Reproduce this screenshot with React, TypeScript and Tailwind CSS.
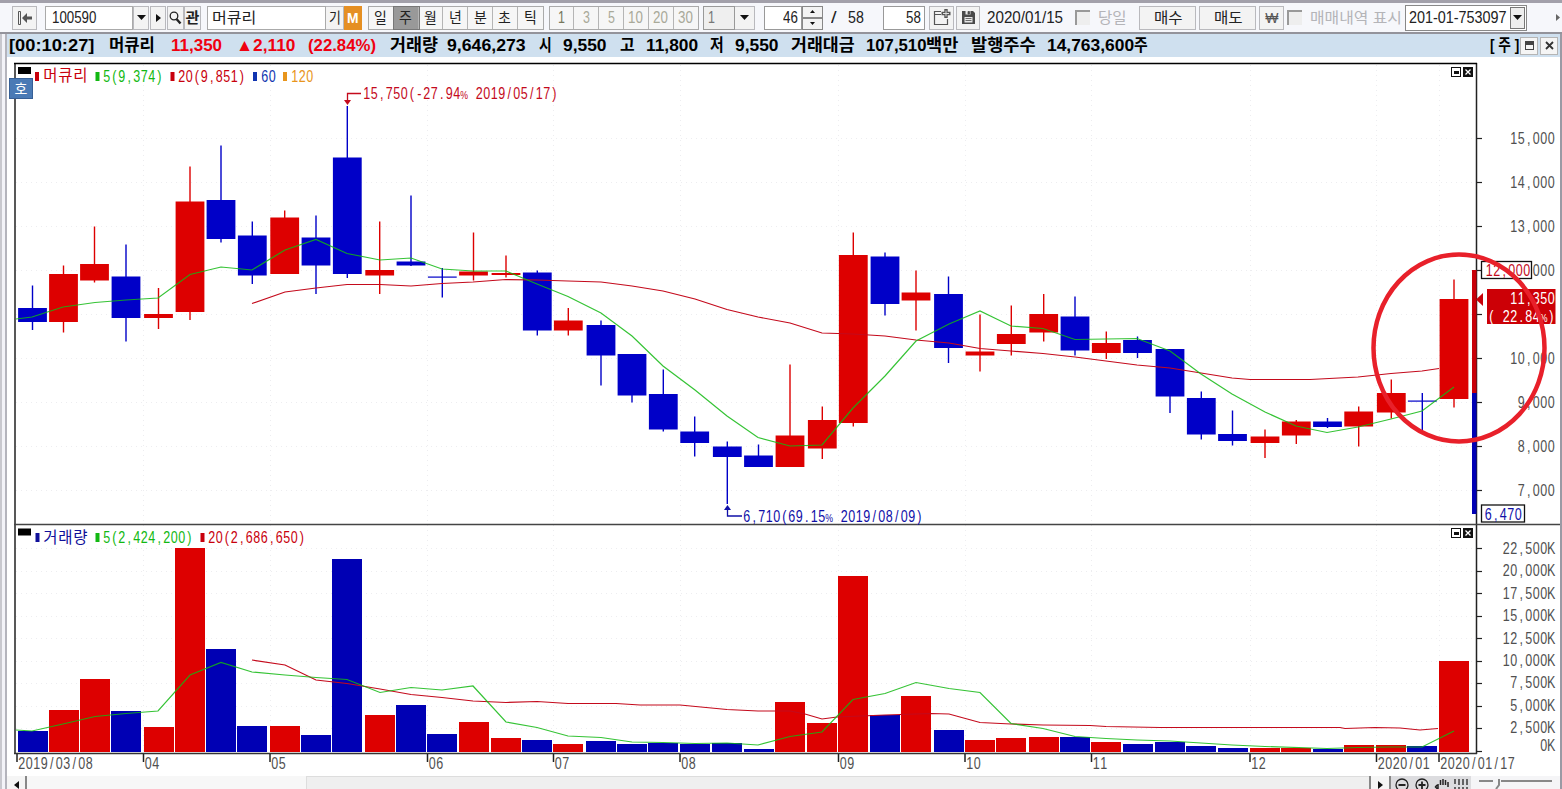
import { useLayoutEffect, useRef, useState } from "react";
import type { ReactNode } from "react";
import clsx from "clsx";

const RED = "#dd0000";
const BLUE = "#0000c8";
const VOLUME_BLUE = "#0000b4";
const GREEN = "#12b812";
const LINE_RED = "#c40a1c";

// x center, body top, body bottom, high, low, color, volume bar top
type Candle = [number, number, number, number, number, string, number];

const candles: Candle[] = [
  [32.5, 308, 322, 285.5, 330, "b", 731],
  [63.5, 274, 322, 265.5, 332.5, "r", 709.5],
  [94.5, 264, 280.5, 226.5, 282.5, "r", 678.5],
  [126, 276.5, 318, 244.5, 341.5, "b", 711],
  [158.5, 314, 318, 288, 329, "r", 727],
  [190, 201.5, 312, 166.5, 320, "r", 548],
  [221, 200, 239, 145.5, 242.5, "b", 648.5],
  [252.3, 235.5, 275.5, 221.5, 284, "b", 726],
  [284.7, 217.5, 274, 210.5, 274, "r", 726],
  [316, 237.5, 265.5, 215.5, 294, "b", 734.5],
  [347.3, 157.5, 274, 106, 278, "b", 558.5],
  [379.7, 270, 275.5, 221.5, 294, "r", 714.5],
  [411, 261.5, 265.5, 195.5, 266, "b", 704.5],
  [442.3, 276.5, 277.7, 268, 297.5, "b", 733.5],
  [473.5, 271.5, 275.5, 232.5, 280.5, "r", 722],
  [506, 273, 275, 255.5, 277.5, "r", 738],
  [537.3, 272.5, 330.5, 270.5, 335.5, "b", 739.5],
  [568.3, 320.5, 330.5, 308, 335.5, "r", 744],
  [601, 325, 355.5, 320.5, 385.5, "b", 741],
  [632, 354, 395.5, 354, 402.5, "b", 744],
  [663.3, 394, 429.5, 369.5, 431.5, "b", 743],
  [694.7, 431.5, 443, 416.5, 456.5, "b", 743.5],
  [727.3, 446.5, 457, 441.5, 504, "b", 743],
  [758.5, 455.5, 467, 444.5, 467, "b", 748.5],
  [790, 435.5, 467, 364.5, 467, "r", 702],
  [822.3, 420, 448.5, 406.5, 459, "r", 723],
  [853.3, 255, 423, 232.5, 426.5, "r", 575.5],
  [885, 256.5, 304, 252.5, 315.5, "b", 715],
  [916, 292.5, 300.5, 270.5, 330.5, "r", 695.5],
  [948.5, 294, 348, 276.5, 363, "b", 729.5],
  [980, 351.5, 355.5, 314.5, 371.5, "r", 739.5],
  [1011.3, 334, 344, 305.5, 355.5, "r", 738],
  [1043.7, 314, 332.5, 294, 341.5, "r", 737],
  [1075, 316.5, 350.5, 296.5, 355.5, "b", 737],
  [1106.3, 343, 353, 331.5, 359, "r", 742],
  [1137.5, 340, 353, 336.5, 358, "b", 744],
  [1170, 349, 396.5, 349, 413, "b", 741.5],
  [1201.3, 398, 434.5, 391.5, 439.5, "b", 745.5],
  [1232.5, 434, 441, 410.5, 445.5, "b", 748],
  [1265, 436.5, 443, 429.5, 458, "r", 748],
  [1296.3, 421.5, 435.5, 420, 444, "r", 747.5],
  [1327.5, 421.5, 427, 418, 428, "b", 748.5],
  [1358.7, 411.5, 426.5, 406.5, 446.5, "r", 744.5],
  [1391.3, 393, 412.5, 379.5, 418.5, "r", 744.5],
  [1422.3, 400.5, 401.7, 393, 430, "b", 745.5],
  [1454, 299, 399, 279.5, 407.5, "r", 660.5],
];

const priceMa5 =
  "16,319 32,317 63,307 95,302.5 126,300 158,298 190,274.5 221,267 252,270 285,250 316,239.5 347,253.5 380,260 411,258 442,269 473,271 506,271 537,284 568,296.5 601,313 632,336 663,366 695,390 727,416 758,437.5 790,446 822,445 853,408 885,376 916,341 949,324 980,311 1011,326 1043,328.5 1075,339.5 1106,339 1137,338.5 1170,351 1201,374 1232,394 1265,412 1296,426 1327,432.5 1358,427 1391,419 1422,411 1454,387";
const priceMa20 =
  "252,303.5 285,292 316,288 347,284.5 380,284.5 411,286 442,283.5 473,282 506,279.5 537,280 568,281 601,282 632,286 663,291 695,299 727,309.5 758,317 790,323 822,333 853,334 885,336 916,340 949,343 980,348.5 1011,351 1043,353.5 1075,357 1106,361 1137,365 1170,368 1201,373 1232,378 1250,379.5 1310,379.5 1358,377 1391,373.5 1422,371 1439,368.5";
const volumeMa5 =
  "16,730 32,731 63,724 95,716.5 126,713.5 158,711 190,675 221,662.5 252,672 285,675 316,677.5 347,679.5 380,692.5 411,687.5 442,690 473,686 506,722 537,727.5 568,736 601,737.5 632,742 663,742.5 695,743.5 727,743 758,745 790,736.5 822,732 853,699.5 885,693.5 916,682.5 949,688.5 980,692.5 1011,723.5 1043,728.5 1075,736.5 1106,738.5 1137,740 1170,741 1201,743 1232,745 1265,746.5 1327,748.5 1358,747.5 1391,747 1422,747 1454,731";
const volumeMa20 =
  "252,660 285,665 316,680 347,683.5 380,689 411,694.5 442,697.5 473,701 506,702.5 537,701.5 568,703.5 616,703.5 640,705 680,705 727,709.5 758,711 790,711 805,714 822,719 837,717 885,715 931,713.5 949,714 980,722.5 1011,724 1043,725 1090,725.5 1106,726.5 1160,727.5 1340,727.5 1345,728.5 1375,727.5 1400,728 1420,730 1438,728.5";

// the 12,000 label is half covered by the upper limit tag
const priceTicks: [number, string][] = [
  [138.5, "15,000"],
  [182.5, "14,000"],
  [226.5, "13,000"],
  [270.5, "000"],
  [314.5, ""],
  [358.5, "10,000"],
  [402.5, "9,000"],
  [446.5, "8,000"],
  [490.5, "7,000"],
];

const volumeTicks: [number, number, string][] = [
  [548.5, 548, "22,500K"],
  [571.5, 570, "20,000K"],
  [593.5, 593, "17,500K"],
  [616.5, 615, "15,000K"],
  [638.5, 638, "12,500K"],
  [661.5, 660, "10,000K"],
  [683.5, 682, "7,500K"],
  [706.5, 705, "5,000K"],
  [728.5, 727, "2,500K"],
  [751.5, 745, "0K"],
];

const dateTicks: [number, string][] = [
  [17, "2019/03/08"],
  [143.5, "04"],
  [270, "05"],
  [427.5, "06"],
  [553.5, "07"],
  [680, "08"],
  [838.5, "09"],
  [965, "10"],
  [1091.5, "11"],
  [1250, "12"],
  [1376.5, "2020/01"],
  [1439, "2020/01/17"],
];

const periods = ["일", "주", "월", "년", "분", "초", "틱"];
const minutes = ["1", "3", "5", "10", "20", "30"];

// Squeezes its text horizontally so that it fills the width of the box
function Fit({ className, children }: { className: string; children: ReactNode }) {
  const box = useRef<HTMLSpanElement>(null);
  const text = useRef<HTMLSpanElement>(null);
  const [scale, setScale] = useState(1);

  useLayoutEffect(() => {
    if (box.current && text.current) {
      setScale(box.current.clientWidth / text.current.offsetWidth);
    }
  }, []);

  return (
    <span ref={box} className={clsx("block shrink-0 whitespace-pre", className)}>
      <span ref={text} className="inline-block origin-left" style={{ transform: `scaleX(${scale})` }}>
        {children}
      </span>
    </span>
  );
}

type ChartTextProps = {
  x: number;
  y: number;
  fill?: string;
  anchor?: "start" | "end";
  pitch?: number;
  squeeze?: number;
  size?: number;
  children: string;
};

// Fixed pitch text, one cell for each character
function ChartText({ x, y, fill = "#505050", anchor = "start", pitch = 7.5, squeeze = 0.76, size = 16.5, children }: ChartTextProps) {
  const left = anchor === "end" ? x - children.length * pitch : x;
  const xs = children.split("").map((_, i) => ((i + 0.5) * pitch) / squeeze);
  return (
    <text
      transform={`translate(${left} ${y}) scale(${squeeze} 1)`}
      x={xs.join(" ")}
      y={0}
      fill={fill}
      fontSize={size}
      textAnchor="middle"
      xmlSpace="preserve"
    >
      {children.split(/(%)/).map((part, i) =>
        part === "%" ? <tspan key={i} fontSize={11.5}>%</tspan> : part
      )}
    </text>
  );
}

function Down() {
  return (
    <svg width="9" height="5" viewBox="0 0 9 5">
      <path d="M0 0h9L4.5 5z" fill="#111" />
    </svg>
  );
}

function Right() {
  return (
    <svg width="5" height="8" viewBox="0 0 5 8">
      <path d="M0 0v8l5-4z" fill="#111" />
    </svg>
  );
}

function Btn({ className, children }: { className?: string; children: ReactNode }) {
  return (
    <button
      className={clsx(
        "flex h-6 shrink-0 items-center justify-center border border-[#b9b9bd] bg-[#f3f3f3]",
        className
      )}
    >
      {children}
    </button>
  );
}

function Toolbar() {
  return (
    <div className="flex h-[34px] shrink-0 items-center border-t-[3px] border-b-2 border-t-[#a2a0aa] border-b-[#93939b] bg-[#f6f7fb] pl-3 text-[15px] text-[#222]">
      <Btn className="mr-2 w-[25px]">
        <svg width="16" height="14" viewBox="0 0 16 14" fill="#555">
          <path d="M1.5.5h2v13h-2z" fill="none" stroke="#555" />
          <path d="M5 7l5-5v3.500h5v3h-5V12z" />
        </svg>
      </Btn>

      <div className="flex h-6 w-[88px] shrink-0 items-center border border-[#aaa] bg-white pl-[6px]">
        <Fit className="w-[44px] text-base">100590</Fit>
      </div>
      <Btn className="mr-px w-4 border-[#777]"><Down /></Btn>
      <Btn className="mr-px w-4 border-[#777]"><Right /></Btn>
      <Btn className="w-[17px] border-[#777]">
        <svg width="13" height="14" viewBox="0 0 13 14" fill="none" stroke="#222">
          <circle cx="5" cy="5" r="3.800" strokeWidth="1.300" />
          <path d="M7.500 8l4 4.500" strokeWidth="2.400" />
        </svg>
      </Btn>
      <Btn className="mr-[6px] w-[17px] border-[#777]"><Fit className="w-[14px] font-bold">관</Fit></Btn>

      <div className="flex h-6 w-[119px] shrink-0 items-center border border-[#aaa] bg-white pl-1">
        <Fit className="w-[44px]">머큐리</Fit>
      </div>
      <Btn className="w-[18px] border-l-0"><Fit className="w-3">기</Fit></Btn>
      <button className="mr-[6px] flex h-6 w-[18px] shrink-0 items-center justify-center bg-[#e58f23]">
        <Fit className="w-[12px] font-bold text-white">M</Fit>
      </button>

      <div className="mr-[5px] flex h-6 shrink-0 border border-[#aaa] bg-[#f6f6f6]">
        {periods.map((p) => (
          <button
            key={p}
            className={clsx(
              "flex w-[24.800px] items-center justify-center border-r border-[#b5b5b5] last:border-r-0",
              p === "주" && "bg-[#999] outline outline-[#777]"
            )}
          >
            <Fit className="w-[13px]">{p}</Fit>
          </button>
        ))}
      </div>

      <div className="mr-1 flex h-6 shrink-0 border border-[#aaa] bg-[#f6f6f6] text-base text-[#a9a999]">
        {minutes.map((m) => (
          <button
            key={m}
            className={clsx(
              "flex w-[24.800px] items-center justify-center border-r border-[#b5b5b5] last:border-r-0",
              m === "1" && "text-[#77775c]"
            )}
          >
            <Fit className={m.length === 2 ? "w-[15px]" : "w-[7px]"}>{m}</Fit>
          </button>
        ))}
      </div>

      <div className="flex h-6 w-8 shrink-0 items-center border border-[#999] bg-[#efefef] pl-1 text-[#777]">
        <Fit className="w-[7px] text-base">1</Fit>
      </div>
      <Btn className="mr-[9px] w-5 border-l-0"><Down /></Btn>

      <div className="flex h-6 w-[38px] shrink-0 items-center justify-end border border-[#999] bg-white pr-[3px]">
        <Fit className="w-[15px] text-base">46</Fit>
      </div>
      <div className="mr-[8px] flex h-6 w-[21px] shrink-0 flex-col">
        <button className="flex flex-1 items-center justify-center border border-[#888] bg-[#f3f3f3]">
          <svg width="5" height="3" viewBox="0 0 5 3"><path d="M0 3h5L2.500 0z" fill="#111" /></svg>
        </button>
        <button className="flex flex-1 items-center justify-center border border-[#888] bg-[#f3f3f3]">
          <svg width="5" height="3" viewBox="0 0 5 3"><path d="M0 0h5L2.500 3z" fill="#111" /></svg>
        </button>
      </div>
      <Fit className="mr-[12px] w-[5px] text-base">/</Fit>
      <Fit className="mr-[19px] w-[16px] text-base">58</Fit>
      <div className="mr-1 flex h-6 w-[42px] shrink-0 items-center justify-end border border-[#999] bg-white pr-[3px]">
        <Fit className="w-[15px] text-base">58</Fit>
      </div>

      <Btn className="mr-[2px] w-[25px]">
        <svg width="18" height="17" viewBox="0 0 18 17" fill="none" stroke="#555">
          <path d="M8 2.500H1.500v13h13V10M1.500 5.500H8" strokeWidth="1.200" />
          <path d="M13 0v9M8.500 4.500h9" strokeWidth="3.400" />
          <path d="M13 1.500v6M10 4.500h6" stroke="#ddd" />
        </svg>
      </Btn>
      <Btn className="mr-[7px] w-6">
        <svg width="13" height="13" viewBox="0 0 13 13">
          <path d="M0 0h11l2 2v11H0z" fill="#4a4a4a" />
          <path d="M3.500 0h5v3.500h-5zM2.500 6h8v5.500h-8z" fill="#e8e8e8" />
          <path d="M6 .5h1.500v2.500H6zM3.500 7.500h6M3.500 9.500h6" fill="#4a4a4a" stroke="#4a4a4a" strokeWidth=".8" />
        </svg>
      </Btn>

      <Fit className="mr-[12px] w-[76px] text-base">2020/01/15</Fit>
      <span className="mr-2 block size-[15px] shrink-0 border-t-2 border-l-2 border-t-[#999] border-l-[#999] bg-[#eee]" />
      <Fit className="mr-3 w-[29px] text-[#b4b4b8]">당일</Fit>
      <Btn className="mr-[3px] w-[57px]"><Fit className="w-[29px]">매수</Fit></Btn>
      <Btn className="mr-[3px] w-[57px]"><Fit className="w-[29px]">매도</Fit></Btn>
      <Btn className="mr-[3px] w-[25px]"><Fit className="w-[13px] text-sm text-[#555]">₩</Fit></Btn>
      <span className="mr-[8px] block size-[15px] shrink-0 border-t-2 border-l-2 border-t-[#999] border-l-[#999] bg-[#eee]" />
      <Fit className="mr-[3px] w-[92px] text-[#b4b4b8]">매매내역 표시</Fit>
      <div className="flex h-[26px] w-[122px] shrink-0 items-center border border-[#888] bg-white pl-[3px]">
        <Fit className="mr-[3px] w-[98px] text-base">201-01-753097</Fit>
        <button className="flex h-[22px] w-[15px] items-center justify-center border border-[#777] bg-[#eee]"><Down /></button>
      </div>
      <span className="ml-[29px]">
        <svg width="4" height="7" viewBox="0 0 4 7"><path d="M0 0v7l4-3.500z" fill="#666" /></svg>
      </span>
    </div>
  );
}

function QuoteBar() {
  return (
    <div className="flex h-[23px] shrink-0 items-center bg-[#cfe0ef] pl-[2px] text-[17px] font-bold text-black">
      <Fit className="mr-[15px] w-[85px]">[00:10:27]</Fit>
      <Fit className="mr-[16px] w-[46px]">머큐리</Fit>
      <Fit className="mr-[14px] w-[51px] text-[#f00010]">11,350</Fit>
      <Fit className="mr-[13px] w-[59px] text-[#f00010]">▲2,110</Fit>
      <Fit className="mr-[14px] w-[68px] text-[#f00010]">(22.84%)</Fit>
      <Fit className="mr-[9px] w-[48px]">거래량</Fit>
      <Fit className="mr-[13px] w-[79px]">9,646,273</Fit>
      <Fit className="mr-[11px] w-[13px]">시</Fit>
      <Fit className="mr-[13px] w-[44px]">9,550</Fit>
      <Fit className="mr-[11px] w-[15px]">고</Fit>
      <Fit className="mr-[12px] w-[52px]">11,800</Fit>
      <Fit className="mr-[11px] w-[14px]">저</Fit>
      <Fit className="mr-[12px] w-[44px]">9,550</Fit>
      <Fit className="mr-[11px] w-[64px]">거래대금</Fit>
      <Fit className="w-[60px]">107,510</Fit>
      <Fit className="mr-[13px] w-[32px]">백만</Fit>
      <Fit className="mr-[11px] w-[65px]">발행주수</Fit>
      <Fit className="w-[87px]">14,763,600</Fit>
      <Fit className="w-[14px]">주</Fit>
      <Fit className="ml-auto w-[29px]">[ 주 ]</Fit>
      <button className="ml-px flex size-[18px] shrink-0 items-center justify-center border border-[#b5b5b5] bg-[#f5f5f5]">
        <svg width="9" height="9" viewBox="0 0 9 9"><path d="M0 0h9v9H0zM1 4v4h7V4z" fill="#444" fillRule="evenodd" /></svg>
      </button>
      <button className="mx-[2px] flex size-[18px] shrink-0 items-center justify-center border border-[#b5b5b5] bg-[#f5f5f5]">
        <svg width="9" height="9" viewBox="0 0 9 9"><path d="M1 1l7 7M8 1L1 8" stroke="#333" strokeWidth="1.800" /></svg>
      </button>
    </div>
  );
}

function PaneButtons({ y }: { y: number }) {
  return (
    <g shapeRendering="crispEdges">
      <rect x={1451.5} y={y + 0.5} width={9} height={9} fill="#fff" stroke="#111" />
      <rect x={1454} y={y + 4} width={5} height={3} fill="#111" />
      <rect x={1463} y={y} width={10} height={10} fill="#111" />
      <path d={`M1465.500 ${y + 2.5}l5 5M1470.500 ${y + 2.5}l-5 5`} stroke="#fff" strokeWidth={1.3} shapeRendering="auto" />
    </g>
  );
}

function Chart() {
  return (
    <svg width="1553" height="719" viewBox="7 57 1553 719" className="block shrink-0 bg-white">
      {/* grid */}
      <g stroke="#ededf0" strokeDasharray="1 4" shapeRendering="crispEdges">
        {priceTicks.map(([y]) => <path key={y} d={`M16 ${y}H1475`} />)}
        {volumeTicks.slice(0, 9).map(([y]) => <path key={y} d={`M16 ${y}H1475`} />)}
        {dateTicks.slice(1).map(([x]) => <path key={x} d={`M${x} 65V752`} />)}
      </g>

      {/* volume */}
      <g shapeRendering="crispEdges">
        {candles.map(([x, , , , , c, top]) => (
          <rect key={x} x={Math.round(x - 15)} y={Math.round(top)} width={30} height={752 - Math.round(top)} fill={c === "r" ? RED : VOLUME_BLUE} />
        ))}
      </g>
      <polyline points={volumeMa20} fill="none" stroke={LINE_RED} strokeWidth={1.2} />
      <polyline points={volumeMa5} fill="none" stroke={GREEN} strokeWidth={1.2} strokeOpacity={0.85} />

      {/* candles */}
      {candles.map(([x, top, bottom, high, low, c]) => {
        const color = c === "r" ? RED : BLUE;
        return (
          <g key={x} fill={color}>
            <rect x={x - 0.7} y={high} width={1.4} height={low - high} />
            <rect x={x - 14.4} y={top} width={28.8} height={bottom - top} />
          </g>
        );
      })}
      <polyline points={priceMa20} fill="none" stroke={LINE_RED} strokeWidth={1.2} />
      <polyline points={priceMa5} fill="none" stroke={GREEN} strokeWidth={1.2} strokeOpacity={0.85} />

      {/* frame */}
      <path d="M15 63V754M1476.500 63V754" stroke="#222" strokeWidth="1.500" />
      <path d="M14 63.500H1477" stroke="#000" strokeWidth="1.300" />
      <path d="M14 524.500H1560" stroke="#444" strokeWidth="1.300" />
      <path d="M14 753.500H1477" stroke="#333" strokeWidth="1.300" />
      <rect x="1472" y="270" width="4.500" height="123" fill="#c80008" />
      <rect x="1472" y="393" width="4.500" height="121" fill={VOLUME_BLUE} />
      <g stroke="#222" strokeWidth="1.200">
        {priceTicks.map(([y]) => <path key={y} d={`M1477 ${y}h5`} />)}
        {volumeTicks.map(([y]) => <path key={y} d={`M1477 ${y}h5`} />)}
        {dateTicks.map(([x]) => <path key={x} d={`M${x} 754v8`} strokeWidth="1.500" />)}
      </g>

      {/* axis labels */}
      {priceTicks.filter(([, label]) => label).map(([y, label]) => (
        <ChartText key={y} x={1555} y={y + 5} anchor="end">{label}</ChartText>
      ))}
      {volumeTicks.map(([y, ly, label]) => (
        <ChartText key={y} x={1555} y={ly + 5.5} anchor="end">{label}</ChartText>
      ))}
      {dateTicks.map(([x, label]) => (
        <ChartText key={x} x={x + 1} y={769}>{label}</ChartText>
      ))}

      {/* legends */}
      <rect x="18" y="67" width="13" height="7" fill="#000" />
      <rect x="35" y="72" width="4" height="9" fill="#c8000c" />
      <ChartText x={43} y={81} fill="#c8000c" pitch={15} squeeze={1} size={15.5}>머큐리</ChartText>
      <rect x="95.500" y="72" width="4" height="9" fill={GREEN} />
      <ChartText x={103} y={81.5} fill={GREEN}>5(9,374)</ChartText>
      <rect x="170.500" y="72" width="4" height="9" fill="#c8000c" />
      <ChartText x={178} y={81.5} fill="#c8000c">20(9,851)</ChartText>
      <rect x="253" y="72" width="4" height="9" fill="#1034b0" />
      <ChartText x={261} y={81.5} fill="#1034b0">60</ChartText>
      <rect x="283" y="72" width="4" height="9" fill="#e8951c" />
      <ChartText x={291} y={81.5} fill="#e8951c">120</ChartText>

      <rect x="18" y="528.500" width="13" height="7" fill="#000" />
      <rect x="35.500" y="533" width="4" height="9" fill="#10109a" />
      <ChartText x={43} y={542.5} fill="#10109a" pitch={15} squeeze={1} size={15.5}>거래량</ChartText>
      <rect x="95.500" y="533" width="4" height="9" fill={GREEN} />
      <ChartText x={103} y={543} fill={GREEN}>5(2,424,200)</ChartText>
      <rect x="200.500" y="533" width="4" height="9" fill="#c8000c" />
      <ChartText x={208} y={543} fill="#c8000c">20(2,686,650)</ChartText>
      <PaneButtons y={67} />
      <PaneButtons y={528} />

      <rect x="9.500" y="78.500" width="23" height="20" fill="#4a7ab5" stroke="#365f96" />
      <text x="21" y="94" fontSize="14" textAnchor="middle" fill="#fff">호</text>

      {/* high / low marks */}
      <path d="M361 93.500H347.500V101" fill="none" stroke={LINE_RED} strokeWidth="1.300" />
      <path d="M344 100h7l-3.500 5z" fill={LINE_RED} />
      <ChartText x={363} y={99} fill={LINE_RED}>15,750(-27.94% 2019/05/17)</ChartText>
      <path d="M742 516H727.500V508" fill="none" stroke="#1010a8" strokeWidth="1.300" />
      <path d="M724 510h7l-3.500-5z" fill="#1010a8" />
      <ChartText x={743} y={521.5} fill="#1010a8">6,710(69.15% 2019/08/09)</ChartText>

      {/* price tags */}
      <rect x="1481.500" y="261.500" width="50" height="17" fill="#fff" stroke="#111" strokeWidth="1.300" />
      <ChartText x={1485.5} y={275.5} fill={LINE_RED}>12,000</ChartText>
      <rect x="1481.500" y="505" width="43" height="17" fill="#fff" stroke="#111" strokeWidth="1.300" />
      <ChartText x={1484.5} y={519.5} fill="#1010a8">6,470</ChartText>
      <path d="M1483 293v13l-7-6.500z" fill="#c80008" />
      <rect x="1487" y="289" width="68.500" height="35" fill="#cc0006" />
      <ChartText x={1555} y={304} fill="#fff" anchor="end">11,350</ChartText>
      <ChartText x={1555} y={321.5} fill="#fff" anchor="end">( 22.84%)</ChartText>
      <ellipse cx="1459" cy="348" rx="85.500" ry="93.500" fill="none" stroke="#e8202a" strokeWidth="4.500" />
    </svg>
  );
}

function ScrollRow() {
  return (
    <div className="flex h-[13px] shrink-0 overflow-hidden bg-[#f3f3f3]">
      <div className="flex w-5 shrink-0 items-center justify-center border-r-2 border-[#888] bg-[#f5f5f5] pt-1">
        <svg width="5" height="8" viewBox="0 0 5 8"><path d="M5 0v8L0 4z" fill="#111" /></svg>
      </div>
      <div className="w-[279px] shrink-0 bg-[#f7f7f7]" />
      <div className="flex-1 border-t border-l border-[#ddd] bg-[#efefef]" />
      <div className="flex w-[22px] shrink-0 items-center justify-center border-x-2 border-[#888] bg-[#f5f5f5] pt-1"><Right /></div>
      <div className="flex w-[80px] shrink-0 bg-[#dcdcdf]">
        <svg width="80" height="13" viewBox="0 0 80 13" fill="none" stroke="#222" strokeWidth="1.300">
          <circle cx="11" cy="9" r="6" />
          <path d="M7.500 9h7M15 13l2 2" strokeWidth="1.800" />
          <circle cx="31" cy="9" r="6" />
          <path d="M27.500 9h7M31 5.500V13" strokeWidth="1.800" />
          <path d="M47 13V8M49.500 9V4M52 9V3M54.500 9V4M57 11V6M46 9l-1.500 2 2 2" strokeWidth="1.500" />
          <path d="M64 3v5M68 3v6M72 3v6M76 3v6M64 11v2M68 11v2M72 11v2M76 11v2" />
        </svg>
      </div>
      <div className="w-[89px] shrink-0 bg-[#f5f5f7]">
        <svg width="89" height="13" viewBox="0 0 89 13" fill="none" stroke="#888" strokeWidth="2">
          <path d="M8 5h14M30 5h51M28 3v6l-3 4" />
        </svg>
      </div>
    </div>
  );
}

export default function App() {
  return (
    <div className="flex h-[789px] w-[1562px] flex-col overflow-hidden bg-[#f6f7fb] font-['Liberation_Sans','Noto_Sans_CJK_KR',sans-serif] leading-none">
      <Toolbar />
      <div className="flex min-h-0 flex-1">
        <div className="w-[7px] shrink-0 border-r-2 border-l-2 border-r-[#b4b4bc] border-l-[#c8c8ce] bg-[#f3f3f8]" />
        <div className="flex min-w-0 flex-1 flex-col bg-white">
          <QuoteBar />
          <Chart />
          <ScrollRow />
        </div>
        <div className="w-[2px] shrink-0 bg-[#9a9aa4]" />
      </div>
    </div>
  );
}
